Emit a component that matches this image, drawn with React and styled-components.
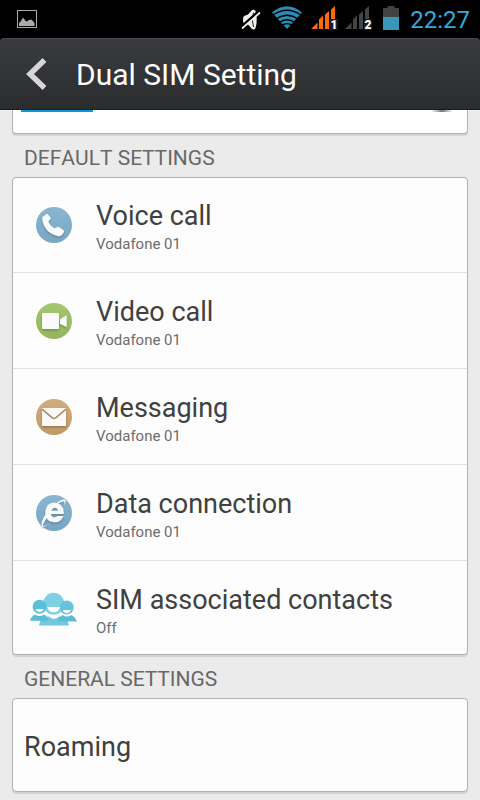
import React from "react";
import styled, { createGlobalStyle } from "styled-components";

const GlobalStyle = createGlobalStyle`
  * {
    box-sizing: border-box;
  }
  body {
    margin: 0;
    background: #ebebeb;
    font-family: Roboto, "Noto Sans", sans-serif;
  }
`;

const Screen = styled.div`
  display: flex;
  flex-direction: column;
  height: 100vh;
  overflow: hidden;
  background: #ebebeb;
`;

const StatusBar = styled.div`
  display: flex;
  align-items: center;
  justify-content: space-between;
  height: 38px;
  flex-shrink: 0;
  padding: 0 10px 0 16px;
  background: #000;
`;

const StatusIcons = styled.div`
  display: flex;
  align-items: center;
  gap: 4px;
`;

const StatusIcon = styled.svg`
  display: block;
  height: 38px;
`;

const Clock = styled.time`
  padding-top: 2px;
  color: #35abdc;
  font-size: 24px;
  line-height: 38px;
`;

const HeaderBack = styled.div`
  flex-shrink: 0;
  background: #000;
`;

const Header = styled.header`
  display: flex;
  align-items: center;
  height: 72px;
  padding: 0 12px;
  border-top: 1px solid #48494b;
  border-bottom: 1px solid #1c1a20;
  border-radius: 4px 4px 0 0;
  background: linear-gradient(#3a3b3e, #2b2c2e);
`;

const BackButton = styled.button`
  display: flex;
  align-items: center;
  justify-content: center;
  width: 48px;
  height: 48px;
  padding: 0;
  border: none;
  background: none;
  cursor: pointer;
`;

const Title = styled.h1`
  margin: 0 0 0 16px;
  padding-top: 2px;
  color: #fff;
  font-size: 30px;
  font-weight: 400;
  font-kerning: none;
  line-height: 40px;
`;

const Content = styled.main`
  flex: 1;
  min-height: 0;
  padding: 0 12px;
  overflow: hidden;
`;

const Card = styled.ul`
  margin: 0;
  padding: 0;
  list-style: none;
  background: #fdfdfd;
  border: 1px solid #b0b0b0;
  border-radius: 4px;
  box-shadow: 0 2px 0 #d4d4d4;
`;

/* tail of the SIM card panel, scrolled under the header */
const SimPanel = styled.div`
  display: flex;
  justify-content: space-between;
  align-items: flex-start;
  height: 24px;
  padding: 0 14px 0 8px;
  background: #fff;
  border: 1px solid #b0b0b0;
  border-top: none;
  border-radius: 0 0 4px 4px;
  box-shadow: 0 2px 0 #d4d4d4;
`;

const TabMarker = styled.span`
  width: 72px;
  height: 2px;
  background: #0a98d8;
`;

const KnobEdge = styled.span`
  width: 22px;
  height: 2px;
  border-radius: 0 0 11px 11px;
  background: linear-gradient(90deg, #fff, #777 50%, #fff);
`;

const SectionTitle = styled.h2`
  margin: 0;
  padding: 4px 12px 0;
  height: 43px;
  color: #686868;
  font-size: 21px;
  font-weight: 400;
  font-kerning: none;
  line-height: 40px;
`;

const Item = styled.li`
  & + & {
    border-top: 1px solid #e0e0e0;
  }
`;

const RowButton = styled.button`
  display: flex;
  align-items: center;
  gap: 18px;
  width: 100%;
  height: ${(props) => props.$height || 95}px;
  padding: 0 ${(props) => (props.$plain ? "11px" : "17px")};
  border: none;
  background: none;
  font-family: inherit;
  text-align: left;
  cursor: pointer;

  ${Item}:last-child:not(:first-child) & {
    padding-top: 3px;
  }
`;

const IconBox = styled.span`
  display: flex;
  justify-content: center;
  width: 48px;
  flex-shrink: 0;
`;

const RowText = styled.span`
  display: flex;
  flex-direction: column;
  padding-top: 4px;
`;

const RowTitle = styled.span`
  color: #404040;
  font-size: 27px;
  line-height: 34px;
`;

const RowValue = styled.span`
  color: #6c6c6c;
  font-size: 15px;
  line-height: 22px;
`;

const PictureIcon = () => (
  <StatusIcon width="22" viewBox="16 0 22 38">
    <rect x="17.5" y="10.5" width="19" height="17" fill="none" stroke="#aaa" />
    <path
      d="M19 26v-3l2-2 1-2 1-1 1 .5 1 2 2 1 2-1.5 2-.5 2 1.5 1.5 2V26z"
      fill="#aaa"
    />
  </StatusIcon>
);

const MutedIcon = () => (
  <StatusIcon width="28" viewBox="240 0 28 38">
    <path
      d="M243.500 16.500Q246 15 248 14.500L252 10Q254.500 9 255.500 11Q258 19 255.500 28Q254.500 30.500 252 29L248 24.500Q245 24 243.500 23Q242.500 20 243.500 16.500z"
      fill="#efefe8"
    />
    <path d="M253.500 12.500Q251 20 253.500 27" fill="none" stroke="#222" />
    <path d="M240.500 27.500L259 11" stroke="#000" strokeWidth="2.500" />
    <path d="M242 28.500L260 12.500" stroke="#efefe8" strokeWidth="1.700" />
  </StatusIcon>
);

const WifiIcon = () => (
  <StatusIcon width="35" viewBox="272 0 35 38">
    <path d="M272 12.500Q287 0 302 12.500L287 29z" fill="#2b8cb6" />
    <g fill="none" stroke="#000" strokeWidth="1.300">
      <path d="M273 15Q287 5.500 301 15" />
      <path d="M276 19Q287 11.500 298 19" />
      <path d="M279 22.500Q287 17 295 22.500" />
      <path d="M281.500 25.300Q287 22 292.500 25.300" />
    </g>
  </StatusIcon>
);

const SignalIcon = ({ color, sim }) => (
  <StatusIcon width="30" viewBox="0 0 30 38">
    <path
      d="M0 29L6.500 22.500V29zM8 29V19.500L12 15.500V29zM14 29V14.500L18 11V29zM20 29V9.500L24 6V29z"
      fill={color}
    />
    <rect x="19" y="19" width="8" height="11" fill="#1b1b1b" />
    <text
      x="23"
      y="29"
      fill="#fff"
      fontSize="12"
      fontWeight="900"
      fontFamily="Roboto, sans-serif"
      textAnchor="middle"
    >
      {sim}
    </text>
  </StatusIcon>
);

const BatteryIcon = () => (
  <StatusIcon width="27" viewBox="379 0 27 38">
    <path d="M383 8h4.500V6h7v2h4.500v9.500h-16z" fill="#424242" />
    <rect x="383" y="17" width="16" height="13" fill="#3a96b9" />
  </StatusIcon>
);

const BackIcon = () => (
  <svg width="48" height="48" viewBox="0 0 48 48">
    <path
      d="M32.500 10L18 24l14.500 14"
      fill="none"
      stroke="#d6d6d6"
      strokeWidth="5.500"
    />
  </svg>
);

const Round = ({ from, to, children }) => {
  const id = "fill" + from.slice(1);
  return (
    <svg width="36" height="36" viewBox="0 0 36 36">
      <defs>
        <linearGradient id={id} x1="0" y1="0" x2="0" y2="1">
          <stop offset="0" stopColor={from} />
          <stop offset="1" stopColor={to} />
        </linearGradient>
        <filter id={id + "shade"} x="-20%" y="-20%" width="140%" height="150%">
          <feDropShadow
            dx="0"
            dy="1.500"
            stdDeviation="1"
            floodColor="#000"
            floodOpacity="0.25"
          />
        </filter>
      </defs>
      <circle cx="18" cy="18" r="18" fill={`url(#${id})`} />
      <g filter={`url(#${id}shade)`}>{children}</g>
    </svg>
  );
};

const VoiceIcon = () => (
  <Round from="#8ab5d1" to="#78a8c3">
    <path
      d="M6.200 11.500Q6 10.500 7 9.700L10 7.200Q11 6.500 11.700 7.300L14.500 10.500Q15.200 11.500 14.300 12.300L12.300 14.200Q13.500 18.500 18.500 21.300L21.500 20Q22.500 19.500 23.300 20.200L27.600 23.300Q28.400 24 27.800 25L26.300 27.500Q24.500 29.600 21.500 29.100Q16.500 28 12 24.200Q6.800 18.500 6.200 11.500z"
      fill="#fafafa"
    />
  </Round>
);

const VideoIcon = () => (
  <Round from="#a6c671" to="#93b65c">
    <rect x="6" y="10" width="17" height="16" rx="1" fill="#fafafa" />
    <path d="M24 16.300L30.700 12.300V24L24 20.700z" fill="#fafafa" />
  </Round>
);

const MessageIcon = () => (
  <Round from="#d2ad7c" to="#c09a68">
    <rect x="6" y="9" width="24" height="18" fill="#fafafa" />
    <path
      d="M6 10.200L16 18.700Q18 20.300 20 18.700L30 10.200"
      fill="none"
      stroke="#b08d60"
      strokeWidth="1.600"
    />
  </Round>
);

const DataIcon = () => (
  <Round from="#89b6d2" to="#76a7c4">
    <path
      d="M27.800 19H14.800Q15.300 22.400 18.400 22.400Q20.600 22.400 21.500 21H27.400Q25 27.300 18.500 27.300Q9.300 26.800 9.300 17.300Q9.800 7.800 18.500 7.500Q28.200 8.200 27.800 19zM14.800 15.700H22.200Q21.700 12.700 18.500 12.700Q15.300 12.700 14.800 15.700z"
      fill="#fafafa"
    />
    <path
      d="M10.500 23.500Q5.500 30.500 7.500 31Q9.500 31.500 13.500 28Q8.500 32.800 6.300 31.300Q4 29 8.500 21Q14 11.500 22.500 6.500Q28.500 3.300 29.600 5.200Q30.300 6.800 28 11Q29 7 28.300 6.300Q26.500 5.500 21.500 9Q15 14 10.500 23.500z"
      fill="#fafafa"
    />
  </Round>
);

const ContactsIcon = () => (
  <svg width="48" height="36" viewBox="30 591 48 36">
    <path d="M39 625.600L41 618.500Q45 616 49 616.500Q54 621 59 616.500Q63 616 67 618.500L69 625.600z" fill="#72c9df" />
    <path d="M30 620.800Q31 616.500 35 614.500Q39.500 617.500 44 614.500Q47.500 616 48.500 620.800z" fill="#5bbcd6" />
    <path d="M57.500 621.500Q59 617 62.500 615Q67 618 71.500 615Q75.500 617 77 621.500z" fill="#5bbcd6" />
    <ellipse cx="53.700" cy="603.800" rx="10.500" ry="11" fill="#7fd0e3" />
    <circle cx="39.600" cy="606.800" r="7" fill="#5bbfd9" />
    <circle cx="66.700" cy="607.500" r="7" fill="#65c4dc" />
    <path d="M47.200 607H60.200Q58.800 612.300 53.700 612.300Q48.600 612.300 47.200 607z" fill="#fff" />
    <path d="M35.500 609H43.700Q42.800 612 39.600 612Q36.400 612 35.500 609z" fill="#fff" />
    <path d="M62.600 610H70.800Q69.900 613 66.700 613Q63.500 613 62.600 610z" fill="#fff" />
  </svg>
);

const defaultSettings = [
  { title: "Voice call", value: "Vodafone 01", icon: VoiceIcon, height: 94 },
  { title: "Video call", value: "Vodafone 01", icon: VideoIcon },
  { title: "Messaging", value: "Vodafone 01", icon: MessageIcon },
  { title: "Data connection", value: "Vodafone 01", icon: DataIcon },
  {
    title: "SIM associated contacts",
    value: "Off",
    icon: ContactsIcon,
    height: 93,
  },
];

const App = () => {
  return (
    <Screen>
      <GlobalStyle />
      <StatusBar>
        <PictureIcon />
        <StatusIcons>
          <MutedIcon />
          <WifiIcon />
          <SignalIcon color="#ff6a0b" sim="1" />
          <SignalIcon color="#444" sim="2" />
          <BatteryIcon />
          <Clock>22:27</Clock>
        </StatusIcons>
      </StatusBar>
      <HeaderBack>
        <Header>
          <BackButton aria-label="Back">
            <BackIcon />
          </BackButton>
          <Title>Dual SIM Setting</Title>
        </Header>
      </HeaderBack>
      <Content>
        <SimPanel>
          <TabMarker />
          <KnobEdge />
        </SimPanel>
        <SectionTitle>DEFAULT SETTINGS</SectionTitle>
        <Card>
          {defaultSettings.map(({ title, value, icon: Icon, height }) => (
            <Item key={title}>
              <RowButton $height={height}>
                <IconBox>
                  <Icon />
                </IconBox>
                <RowText>
                  <RowTitle>{title}</RowTitle>
                  <RowValue>{value}</RowValue>
                </RowText>
              </RowButton>
            </Item>
          ))}
        </Card>
        <SectionTitle>GENERAL SETTINGS</SectionTitle>
        <Card>
          <Item>
            <RowButton $plain $height={92}>
              <RowText>
                <RowTitle>Roaming</RowTitle>
              </RowText>
            </RowButton>
          </Item>
        </Card>
      </Content>
    </Screen>
  );
};

export default App;
